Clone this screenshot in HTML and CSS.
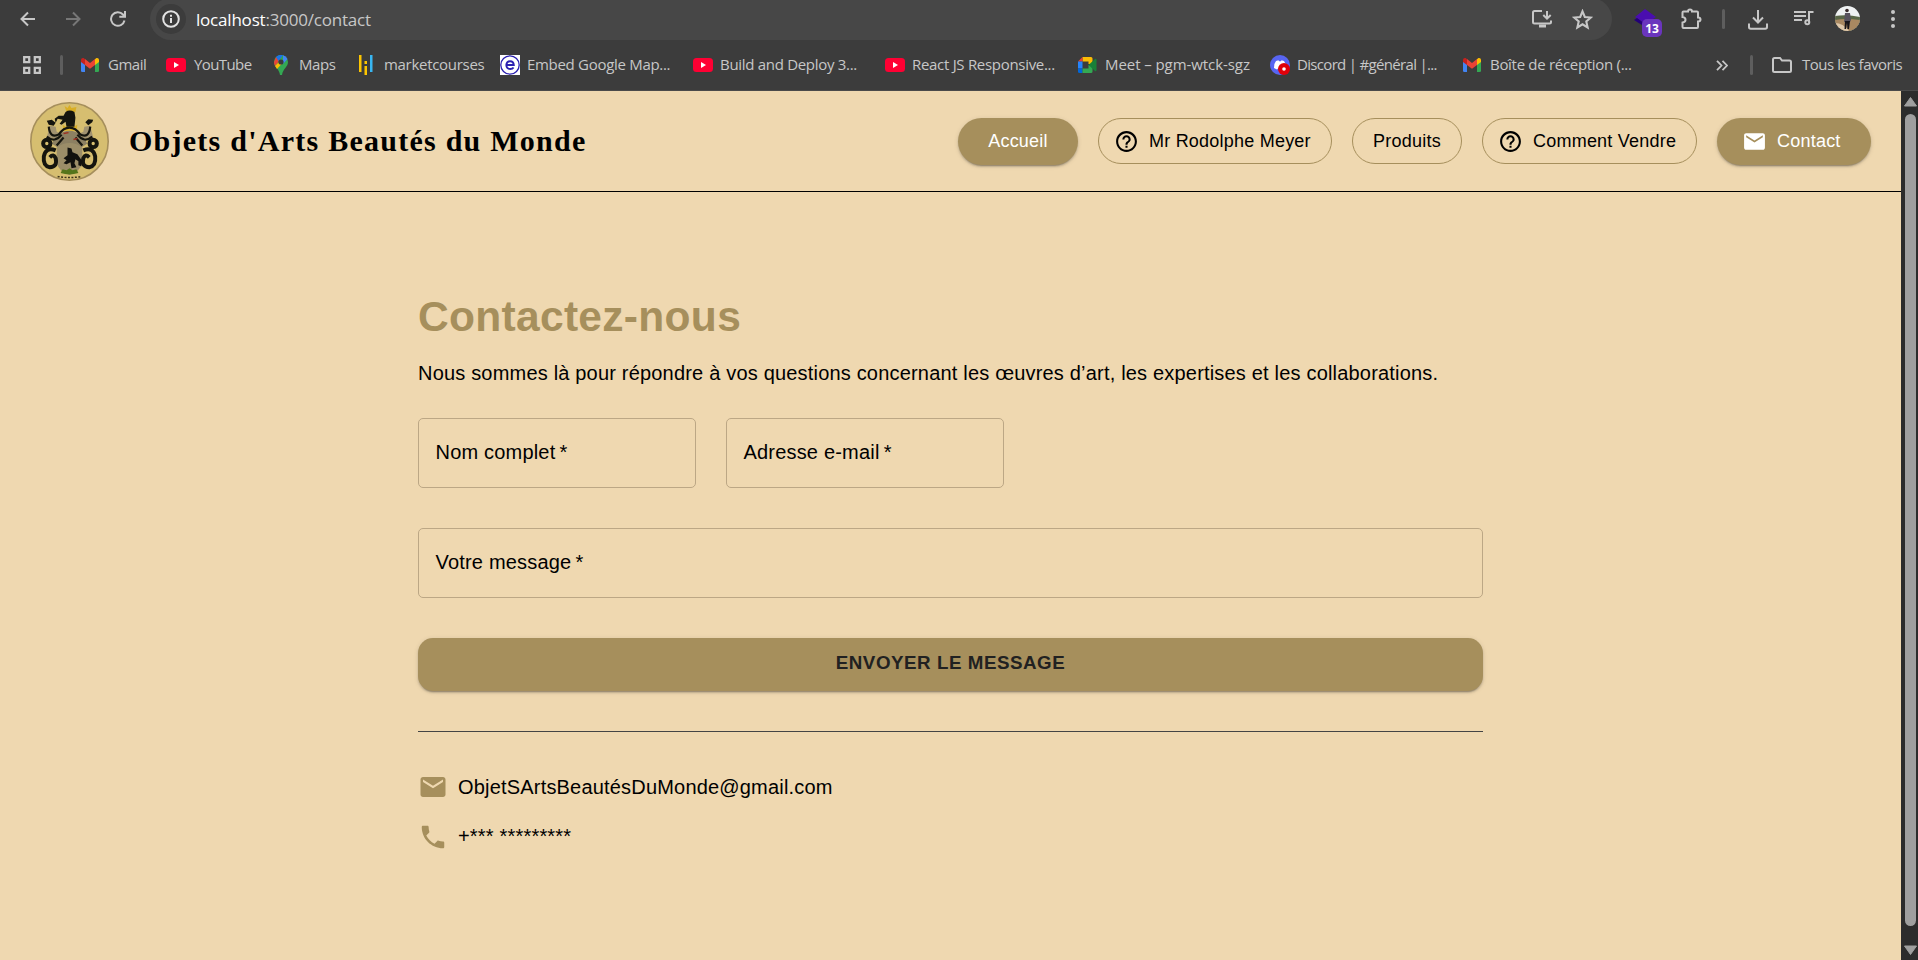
FILE: index.html
```html
<!DOCTYPE html>
<html lang="fr">
<head>
<meta charset="utf-8">
<title>Objets d'Arts Beautés du Monde</title>
<link rel="stylesheet" href="styles.css">
</head>
<body>
<svg class="defs" width="0" height="0" aria-hidden="true">
  <symbol id="gmail" viewBox="0 0 18 14"><path d="M0 2v10.800Q0 14 1.300 14H4V6z" fill="#4285f4"/><path d="M18 2v10.800q0 1.200-1.300 1.200H14V6z" fill="#34a853"/><path d="M14 1.300V7l4-3V2c0-1.900-2-2.500-3.200-1.500z" fill="#fbbc04"/><path d="M4 1.300V7L0 4V2C0 .1 2-.5 3.200.5z" fill="#c5221f"/><path d="M4 7V1.100l5 3.800 5-3.800V7l-5 3.800z" fill="#ea4335"/></symbol>
  <symbol id="yt" viewBox="0 0 20 14"><rect width="20" height="14" rx="3.500" fill="#f03"/><path d="M8 4v6l5-3z" fill="#fff"/></symbol>
  <symbol id="help" viewBox="0 0 24 24"><path d="M11 18h2v-2h-2v2zm1-16C6.480 2 2 6.480 2 12s4.480 10 10 10 10-4.480 10-10S17.520 2 12 2zm0 18c-4.410 0-8-3.590-8-8s3.590-8 8-8 8 3.590 8 8-3.590 8-8 8zm0-14c-2.210 0-4 1.790-4 4h2c0-1.100.9-2 2-2s2 .9 2 2c0 2-3 1.750-3 5h2c0-2.250 3-2.500 3-5 0-2.210-1.790-4-4-4z"/></symbol>
  <symbol id="mail" viewBox="0 0 24 24"><path d="M20 4H4c-1.100 0-1.990.9-1.990 2L2 18c0 1.100.9 2 2 2h16c1.100 0 2-.9 2-2V6c0-1.100-.9-2-2-2zm0 4-8 5-8-5V6l8 5 8-5v2z"/></symbol>
</svg>

<div class="chrome">
  <div class="toolbar">
    <svg class="nav-icon back" viewBox="0 0 16 16"><path d="M15 8H2M8 1.500 1.500 8 8 14.500"/></svg>
    <svg class="nav-icon forward" viewBox="0 0 16 16"><path d="M1 8h13M8 1.500 14.500 8 8 14.500"/></svg>
    <svg class="nav-icon reload" viewBox="0 0 16 16"><path d="M14.500 9.500A6.800 6.800 0 1 1 13 3.500L14.800 5.500M15 0v5.800H9.300"/></svg>
    <div class="omnibox">
      <span class="site-info"><svg viewBox="0 0 18 18" width="18" height="18"><circle cx="9" cy="9" r="7.800"/><path d="M9 8v5M9 4.700v2"/></svg></span>
      <span class="url"><b>localhost</b>:3000/contact</span>
      <svg class="install" viewBox="0 0 22 20"><path d="M11 2H3.500Q2 2 2 3.500V13q0 1.500 1.500 1.500h15Q20 14.500 20 13v-1.500M16 2v7.500M12.300 6l3.700 3.700L19.700 6"/><path d="M8 17h7" stroke-width="3"/></svg>
      <svg class="star" viewBox="0 0 20 20"><path d="m10 2.200 2.200 5.400 5.800.5-4.400 3.800 1.300 5.700-4.900-3-4.900 3 1.300-5.700L2 8.100l5.800-.5z"/></svg>
    </div>
    <div class="ext"><svg viewBox="0 0 22 20" width="22" height="20"><path d="m11 0 11 8-11 7L1 8z" fill="#4a0db0"/><path d="m0 11 3-2 8 6v3z" fill="#230078"/></svg><span class="ext-count">13</span></div>
    <svg class="puzzle" viewBox="0 0 22 22"><path d="M3.500 3.500H8q0-2 2-2t2 2h5q1 0 1 1V9.500q2.500 0 2.500 2t-2.500 2V19q0 1-1 1H3.500q-1 0-1-1v-4.500q3-.5 3-2.800t-3-2.700V4.500q0-1 1-1z"/></svg>
    <i class="sep top-sep"></i>
    <svg class="download" viewBox="0 0 22 22"><path d="M11 1v12M6 8.500l5 5 5-5M2 14.500V18q0 1.700 1.700 1.700h14.600Q20 19.700 20 18v-3.500"/></svg>
    <svg class="queue" viewBox="0 0 20 16"><path d="M0 2h12M0 6h12M0 10h8M15 12.500V2h4.500"/><circle cx="13.300" cy="12.300" r="2" /></svg>
    <svg class="avatar" viewBox="0 0 25 25"><clipPath id="face"><circle cx="12.500" cy="12.500" r="12.500"/></clipPath><g clip-path="url(#face)"><path d="M0 0h25v25H0z" fill="#eef1f2"/><path d="M0 10q12-2 25 1v14H0z" fill="#596647"/><path d="M0 14q10-2 25 0v11H0z" fill="#a98861"/><path d="M0 17q8 0 14 8H0z" fill="#dfc8ab"/><circle cx="12" cy="4.500" r="1.800" fill="#382b2c"/><path d="M10 7h5l1 7-1 2H9z" fill="#56515d"/><path d="M10 15h5l-1 8h-1.500L12 17l-1 6H9.500z" fill="#171419"/></g></svg>
    <svg class="dots" viewBox="0 0 4 20"><circle cx="2" cy="2" r="2"/><circle cx="2" cy="9" r="2"/><circle cx="2" cy="16" r="2"/></svg>
  </div>
  <div class="bookmarks">
    <svg class="apps" viewBox="0 0 18 18"><path d="M1.200 1.200h5v5h-5zM11.800 1.200h5v5h-5zM1.200 11.800h5v5h-5zM11.800 11.800h5v5h-5z"/></svg>
    <i class="sep"></i>
    <span class="bm gm"><svg width="18" height="14"><use href="#gmail"/></svg><span>Gmail</span></span>
    <span class="bm yt1"><svg width="20" height="14"><use href="#yt"/></svg><span>YouTube</span></span>
    <span class="bm maps"><svg width="14" height="20" viewBox="0 0 14 20"><path d="M0 7a7 7 0 0 1 14 0c0 5-5 6.500-6 13H6C5.500 14 0 12 0 7z" fill="#34a853"/><path d="M0 7l2-5 4 3-5 6Q0 9 0 7z" fill="#ea4335"/><path d="M2 2q3-3 7-1.700L4.500 6z" fill="#1a73e8"/><path d="M9 .3Q12 1 13.500 4L9 9z" fill="#4285f4"/><path d="M1 11l4-4 3 1.500L3 14z" fill="#fbbc04"/><circle cx="7" cy="7" r="2.600" fill="#3c3c3c"/></svg><span>Maps</span></span>
    <span class="bm market"><svg width="14" height="20" viewBox="0 0 14 20"><path d="M0 0h2.500v17H0zM5.500 6H8v3H5.500zM5.500 11H8v9H5.500z" fill="#fdc500"/><path d="M11 0h2.500v17H11z" fill="#38b6f2"/></svg><span>marketcourses</span></span>
    <span class="bm embed"><svg width="20" height="20" viewBox="0 0 20 20"><path d="M0 0h20v20H0z" fill="#fff"/><circle cx="10" cy="10" r="9.200" fill="none" stroke="#2a1fb0" stroke-width="1.300"/><path d="M6.500 10h7.300q-.2-3.800-3.700-3.800T6.300 10q.2 4 4 4 2.200 0 3.300-1.500" fill="none" stroke="#2a1fb0" stroke-width="1.900"/></svg><span>Embed Google Map...</span></span>
    <span class="bm build"><svg width="20" height="14"><use href="#yt"/></svg><span>Build and Deploy 3...</span></span>
    <span class="bm react"><svg width="20" height="14"><use href="#yt"/></svg><span>React JS Responsive...</span></span>
    <span class="bm meet"><svg width="19" height="16" viewBox="0 0 19 16"><path d="M4.500 0H13q1.500 0 1.500 1.500V7h-4V4.500h-6z" fill="#fbbc04"/><path d="M0 4.500 4.500 0v4.500z" fill="#ea4335"/><path d="M0 4.500h4.500v7H0z" fill="#2684fc"/><path d="M0 11.500h4.500V16H1.500Q0 16 0 14.500z" fill="#0066da"/><path d="M4.500 11.500h6V8h4v6.500q0 1.500-1.500 1.500H4.500z" fill="#34a853"/><path d="M10.500 8 17 2q1.500-.8 1.500 1v10q0 1.800-1.500 1z" fill="#188038"/></svg><span>Meet – pgm-wtck-sgz</span></span>
    <span class="bm discord"><svg width="20" height="20" viewBox="0 0 20 20"><circle cx="10" cy="10" r="10" fill="#5865f2"/><path d="M4 13q-.5-4 2-7l2.500-.7.500 1h2l.5-1L14 6q2.500 3 2 7l-3 1.500-1-1H8l-1 1z" fill="#fff"/><circle cx="14" cy="14" r="6" fill="#e00009"/><circle cx="14" cy="14" r="1.800" fill="#fff"/></svg><span>Discord | #général |...</span></span>
    <span class="bm inbox"><svg width="18" height="14"><use href="#gmail"/></svg><span>Boîte de réception (...</span></span>
    <svg class="more" viewBox="0 0 12 11"><path d="m1 .8 4.500 4.700L1 10.200M6.500.8 11 5.500l-4.500 4.700"/></svg>
    <i class="sep sep2"></i>
    <span class="bm all"><svg width="20" height="16" viewBox="0 0 20 16"><path d="M2.500 1H8l2 2.500h7.500q1.500 0 1.500 1.500v8.500q0 1.500-1.500 1.500h-15Q1 15 1 13.500v-11Q1 1 2.500 1z" fill="none" stroke="#c7c7c7" stroke-width="2"/></svg><span>Tous les favoris</span></span>
  </div>
</div>

<div class="viewport">
  <div class="page">
    <header class="header">
      <svg class="crest" viewBox="0 0 80 80">
        <circle cx="40" cy="40" r="39.200" fill="#d6be70" stroke="#a68f5c" stroke-width="1.600"/>
        <path d="M35 4l3 2 2-3 2 3 5-1-1 5h-9zM33 23l3 2 4-3 4 3 4-2-1 6H34z" fill="#d9ae26"/>
        <g fill="#15150e"><path d="M36 10q4-3 9 0l1 6-1 9h-8l-1-5-4 3-2-1 3-4-5-1-2 4-1-4 4-3h5z"/><path d="M17 19l5-1 4 3-2 3-5-1zM64 18l-5-.500-3 3 3 3 4-3z"/></g>
        <path d="M20 24l6 1 1 5 6 3-7 4-9-1zM61 24l-6 1-1 5-6 3 7 4 9-1z" fill="#a29370"/>
        <path d="M27 34q13-10 26 0l5 8-6 4H28l-6-4z" fill="#8c8062"/>
        <g fill="none" stroke="#15150e" stroke-width="2.200"><path d="M19 25q1 12 10 8 5-7 11-7t11 7q9 4 10-8"/><path d="M17 35q8 7 15-2M63 35q-8 7-15-2M27 44l7-8M53 44l-7-8"/></g>
        <g fill="#9b8d68"><path d="M27 46q13-9 26 0v16q-3 9-13 12-10-3-13-12z"/></g>
        <g fill="none" stroke="#15150e" stroke-width="4"><circle cx="17" cy="42" r="3.700"/><circle cx="64" cy="42" r="3.700"/><path d="M26 49q-10-4-12 6-1 10 6 11 8 0 6-9-2-5-6-1M54 49q10-4 12 6 1 10-6 11-8 0-6-9 2-5 6-1"/></g>
        <path d="m38 46 4 1 1 4 5 2 5 7-1 5-3-1v-4l-3-2-1 4 2 4-5 1-1-6-4 2-3-1 3-3-3-2 4-3z" fill="#11110e"/>
        <path d="m31 72 2-4 4 1 3-2 3 2 4-1 2 4q-9 3-18 0z" fill="#55751b"/>
        <path d="M34 32l5-1M44 38l4-1" stroke="#9c3022" stroke-width="1.500"/>
        <path d="M28 75.500q12 2 24 0" fill="none" stroke="#3a321b" stroke-width="1.500" stroke-dasharray="2 1.500"/>
      </svg>
      <div class="brand">Objets d'Arts Beautés du Monde</div>
      <nav class="nav">
        <a class="btn solid accueil">Accueil</a>
        <a class="btn line with-icon meyer"><svg><use href="#help"/></svg>Mr Rodolphe Meyer</a>
        <a class="btn line produits">Produits</a>
        <a class="btn line with-icon vendre"><svg><use href="#help"/></svg>Comment Vendre</a>
        <a class="btn solid with-icon contact"><svg><use href="#mail"/></svg>Contact</a>
      </nav>
    </header>
    <main class="main">
      <h1>Contactez-nous</h1>
      <p class="lead">Nous sommes là pour répondre à vos questions concernant les œuvres d’art, les expertises et les collaborations.</p>
      <form>
        <div class="row">
          <label class="field">Nom complet&thinsp;*</label>
          <label class="field">Adresse e-mail&thinsp;*</label>
        </div>
        <label class="field message">Votre message&thinsp;*</label>
        <button class="send" type="button">ENVOYER LE MESSAGE</button>
      </form>
      <div class="info">
        <div class="info-row"><svg><use href="#mail"/></svg><span>ObjetSArtsBeautésDuMonde@gmail.com</span></div>
        <div class="info-row phone"><svg viewBox="0 0 24 24"><path d="M6.620 10.790c1.440 2.830 3.760 5.140 6.590 6.590l2.200-2.200c.27-.27.67-.36 1.020-.24 1.120.37 2.330.57 3.570.57.550 0 1 .45 1 1V20c0 .55-.45 1-1 1-9.390 0-17-7.610-17-17 0-.55.450-1 1-1h3.500c.550 0 1 .45 1 1 0 1.250.2 2.450.57 3.570.110.350.030.740-.25 1.020l-2.200 2.200z"/></svg><span>+*** *********</span></div>
      </div>
    </main>
  </div>
  <div class="scrollbar">
    <svg width="13" height="10" viewBox="0 0 13 10"><path d="M6.500.5 12.500 9H.5z" stroke-linejoin="round"/></svg>
    <div class="thumb"></div>
    <svg width="13" height="10" viewBox="0 0 13 10"><path d="M6.500 9.500.5 1h12z" stroke-linejoin="round"/></svg>
  </div>
</div>
</body>
</html>
```
FILE: styles.css
```css
* { box-sizing: border-box; }
body { margin: 0; width: 1918px; height: 960px; overflow: hidden; background: #efd8b0; font-family: "Liberation Sans", Arial, sans-serif; color: #000; }
svg { display: block; flex: none; }
.defs { position: absolute; }

/* browser chrome */
.chrome { height: 91px; background: #3c3c3c; border-bottom: 1px solid #4a4a4a; font-family: "Open Sans", "Noto Sans", sans-serif; color: #c7c7c7; overflow: hidden; }
.toolbar { height: 40px; display: flex; align-items: center; padding-left: 20px; }
.toolbar svg { fill: none; stroke: #c7c7c7; stroke-width: 2; }
.nav-icon { width: 16px; height: 16px; margin-top: -3px; }
.forward { margin-left: 29px; stroke: #777 !important; }
.reload { margin-left: 29px; }
.omnibox { margin-left: 24px; width: 1462px; height: 42px; margin-top: -2px; border-radius: 21px; background: #474747; display: flex; align-items: center; padding-left: 6px; flex: none; }
.site-info { width: 30px; height: 30px; border-radius: 50%; background: #3c3c3c; display: grid; place-items: center; }
.omnibox .site-info svg { stroke: #e3e3e3; }
.url { margin-left: 10px; font-size: 17px; width: 181px; letter-spacing: -.2px; white-space: nowrap; }
.url b { font-weight: 400; color: #fff; }
.install { width: 22px; height: 20px; margin-left: 1154px; }
.star { width: 21px; height: 21px; margin-left: 19px; }
.ext { width: 30px; height: 40px; margin-left: 22px; padding-top: 9px; position: relative; flex: none; }
.ext svg { stroke: none; }
.ext-count { position: absolute; left: 8px; top: 19px; width: 20px; height: 18px; border-radius: 5px; background: #6a35bd; color: #fff; font-size: 12px; line-height: 19px; font-weight: 700; text-align: center; }
.puzzle { width: 22px; height: 22px; margin: -3px 0 0 16px; }
.sep { width: 3px; height: 20px; border-radius: 2px; background: #5e5e5e; flex: none; }
.top-sep { margin: -3px 0 0 20px; }
.download { width: 22px; height: 22px; margin-left: 22px; }
.queue { width: 20px; height: 16px; margin: -5px 0 0 25px; }
.avatar { width: 25px; height: 25px; margin: -3px 0 0 21px; stroke: none !important; }
.dots { width: 4px; height: 20px; margin-left: 31px; fill: #c7c7c7 !important; stroke: none !important; }
.bookmarks { height: 50px; display: flex; align-items: center; padding-left: 23px; font-size: 15px; }
.apps { width: 18px; height: 18px; fill: none; stroke: #c7c7c7; stroke-width: 2.300; }
.apps + .sep { margin-left: 19px; }
.bm { display: flex; align-items: center; gap: 9px; white-space: nowrap; flex: none; letter-spacing: -.3px; }
.bm span { margin-top: -3px; }
.gm { margin-left: 18px; width: 85px; letter-spacing: -.5px; }
.yt1 { width: 108px; gap: 8px; letter-spacing: -.6px; }
.maps { width: 85px; gap: 11px; letter-spacing: -.45px; }
.market { width: 141px; gap: 11px; }
.embed { width: 193px; gap: 7px; }
.build { width: 192px; gap: 7px; }
.react { width: 193px; gap: 7px; }
.meet { width: 192px; gap: 8px; letter-spacing: -.07px; }
.discord { width: 193px; gap: 7px; letter-spacing: -.68px; }
.inbox { width: 253px; }
.more { width: 12px; height: 11px; fill: none; stroke: #c7c7c7; stroke-width: 1.800; }
.sep2 { margin-left: 22px; }
.all { margin-left: 19px; gap: 10px; letter-spacing: -.47px; }

/* page */
.viewport { display: flex; height: 869px; }
.page { width: 1901px; }
.header { height: 101px; border-bottom: 1px solid #000; padding: 0 30px; display: flex; align-items: center; }
.crest { width: 79px; height: 79px; margin-top: 1px; }
.brand { margin-left: 20px; font: 700 30px/40px "Liberation Serif", serif; letter-spacing: 1.250px; white-space: nowrap; }
.nav { margin: 1px 0 0 auto; display: flex; gap: 20px; align-items: flex-start; }
.btn { height: 46px; border-radius: 25px; display: flex; align-items: center; justify-content: center; font-size: 18px; letter-spacing: .22px; white-space: nowrap; }
.btn svg { width: 25px; height: 25px; margin-right: 10px; fill: currentColor; }
.solid { height: 47px; padding-bottom: 1px; background: #a68f5c; color: #fff; box-shadow: 0 3px 1px -2px rgba(0,0,0,.2), 0 2px 2px rgba(0,0,0,.14), 0 1px 5px rgba(0,0,0,.12); }
.line { border: 1px solid #a68f5c; }
.with-icon { justify-content: flex-start; padding-left: 15px; }
.accueil { width: 120px; }
.meyer { width: 234px; }
.produits { width: 110px; }
.vendre { width: 215px; }
.contact { width: 154px; padding-left: 25px; }
.main { width: 1065px; margin-left: 418px; padding-top: 99px; }
h1 { margin: 0; font-size: 42.500px; line-height: 52px; letter-spacing: .31px; color: #a68f5c; }
.lead { margin: 15px 0 30px; font-size: 20px; line-height: 30px; letter-spacing: .188px; white-space: nowrap; }
.row { display: flex; gap: 30px; margin-bottom: 40px; }
.field { display: flex; align-items: center; width: 278px; height: 70px; padding: 0 16.500px 2px; border: 1px solid #bca785; border-radius: 5px; font-size: 20px; letter-spacing: .188px; }
.message { width: 100%; }
.send { display: block; width: 100%; height: 53px; margin-top: 40px; padding: 0 0 4px; border: 0; border-radius: 15px; background: #a68f5c; color: #212121; font: 700 18.750px/30px "Liberation Sans", Arial, sans-serif; letter-spacing: .54px; box-shadow: 0 3px 1px -2px rgba(0,0,0,.2), 0 2px 2px rgba(0,0,0,.14), 0 1px 5px rgba(0,0,0,.12); }
.info { margin-top: 40px; border-top: 1px solid #444; padding-top: 40px; display: grid; gap: 20px; }
.info-row { display: flex; align-items: center; gap: 10px; height: 30px; font-size: 20px; letter-spacing: .188px; }
.phone span { margin-top: -2px; }
.info-row svg { width: 30px; height: 30px; fill: #a68f5c; }
.scrollbar { width: 17px; background: #2c2c2c; display: flex; flex-direction: column; align-items: center; padding: 6px 0 5px 2px; }
.scrollbar svg { fill: #9f9f9f; stroke: #9f9f9f; }
.thumb { width: 11px; flex: 1; margin: 7px 0 19px; border-radius: 6px; background: #9f9f9f; }
```
